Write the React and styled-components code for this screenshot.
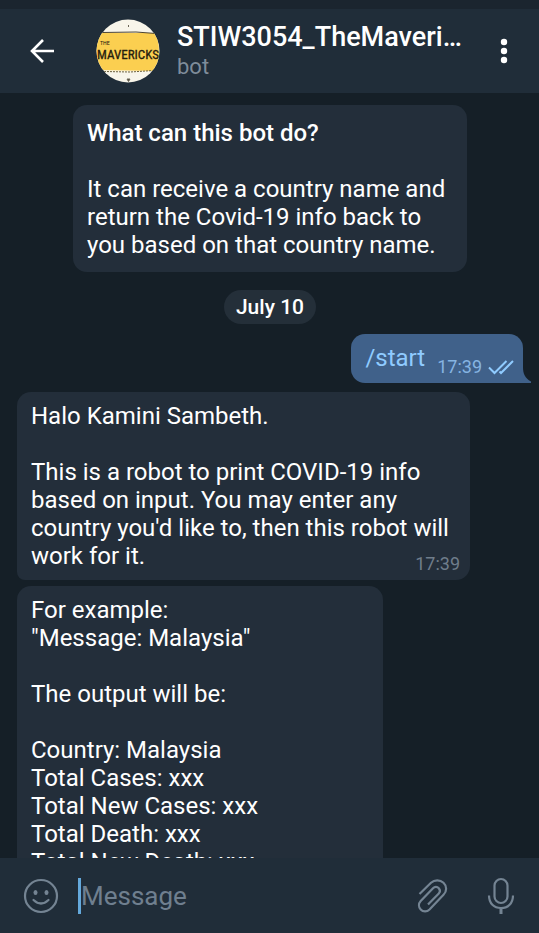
import React from "react";
import styled, { createGlobalStyle } from "styled-components";

const GlobalStyle = createGlobalStyle`
  *, *::before, *::after { box-sizing: border-box; }
  body {
    margin: 0;
    background: #151f27;
    color: #fff;
    font-family: Roboto, "Liberation Sans", sans-serif;
  }
`;

const Screen = styled.div`
  display: flex;
  flex-direction: column;
  height: 100vh;
  overflow: hidden;
`;

const StatusStrip = styled.div`
  flex: none;
  height: 9px;
  background: #1b252f;
`;

const Header = styled.header`
  flex: none;
  display: flex;
  align-items: center;
  height: 84px;
  padding: 0 19px 0 26px;
  background: #202d39;
`;

const IconButton = styled.button`
  flex: none;
  display: grid;
  place-items: center;
  width: ${(p) => p.$width || 32}px;
  height: 44px;
  padding: 0;
  border: 0;
  background: none;
  color: ${(p) => p.$color || "#748493"};
  cursor: pointer;

  svg { display: block; }
`;

const Avatar = styled.svg`
  flex: none;
  width: 64px;
  height: 64px;
  margin-left: 38px;
`;

const Titles = styled.div`
  flex: 1;
  min-width: 0;
  margin-left: 17px;
  padding-right: 20px;
`;

const Title = styled.h1`
  margin: 0;
  overflow: hidden;
  font-size: 27px;
  font-weight: 500;
  line-height: 32px;
  white-space: nowrap;
  text-overflow: ellipsis;
`;

const Subtitle = styled.p`
  margin: 0;
  color: #7e8c9a;
  font-size: 22px;
  line-height: 28px;
`;

const Chat = styled.main`
  flex: 1;
  min-height: 0;
  display: flex;
  flex-direction: column;
  align-items: flex-start;
  padding: 12px 16px 0 17px;
  overflow: hidden;
`;

const Bubble = styled.article`
  flex: none;
  display: grid;
  max-width: 453px;
  min-width: ${(p) => p.$minWidth || 0}px;
  margin-bottom: 6px;
  padding: 10px 10px 10px 14px;
  border-radius: ${(p) => p.$radius || "14px 14px 14px 8px"};
  background: #232e3a;
`;

const IntroBubble = styled(Bubble)`
  align-self: center;
  max-width: 394px;
  margin-bottom: 18px;
  padding: 14px 14px 13px;
`;

const SentBubble = styled(Bubble)`
  position: relative;
  align-self: flex-end;
  display: flex;
  align-items: flex-end;
  gap: 12px;
  margin-bottom: 9px;
  padding: 10px 9px 4px 14px;
  background: #40618a;
`;

const Text = styled.p`
  grid-area: 1 / 1;
  margin: 0;
  font-size: 24px;
  line-height: 28px;
  white-space: pre-line;
`;

const Strong = styled.strong`
  font-weight: 500;
`;

const Command = styled.a`
  padding-bottom: 7px;
  color: #8fcbff;
  font-size: 24px;
  line-height: 28px;
  text-decoration: none;
`;

const Time = styled.time`
  grid-area: 1 / 1;
  place-self: end;
  margin-bottom: -6px;
  color: #6f7d8b;
  font-size: 18px;
  line-height: 24px;
`;

const SentMeta = styled.span`
  display: flex;
  align-items: center;
  gap: 6px;
  color: #86b4e2;
  font-size: 18px;
  line-height: 24px;
`;

const Tail = styled.svg`
  position: absolute;
  right: -8px;
  bottom: 0;
`;

const DateChip = styled.div`
  flex: none;
  align-self: center;
  margin-bottom: 10px;
  padding: 3px 12px;
  border-radius: 17px;
  background: #242f39;
  font-size: 21px;
  font-weight: 500;
  line-height: 28px;
`;

const Composer = styled.form`
  flex: none;
  display: flex;
  align-items: center;
  height: 75px;
  padding: 0 22px 0 23px;
  background: #202d39;
`;

const MessageInput = styled.input`
  flex: 1;
  min-width: 0;
  height: 36px;
  margin: 0 20px 0 19px;
  padding: 0;
  border: 0;
  border-left: 3px solid #64a9dc;
  outline: 0;
  background: none;
  color: #fff;
  font: 26px Roboto, "Liberation Sans", sans-serif;

  &::placeholder { color: #6f7f8f; opacity: 1; }
`;

const TrailingActions = styled.div`
  display: flex;
  gap: 36px;
`;

function MavericksAvatar() {
  return (
    <Avatar viewBox="0 0 64 64" role="img" aria-label="The Mavericks">
      <defs>
        <clipPath id="avatar-circle"><circle cx="32" cy="32" r="31.5" /></clipPath>
      </defs>
      <g clipPath="url(#avatar-circle)">
        <rect width="64" height="64" fill="#f8f5ea" />
        <path d="M0 14 L62 14 L64 52 L0 51Z" fill="#fbcf50" />
        <path d="M6 13.5 L40 13 L60 14.5" fill="none" stroke="#4b4330" strokeWidth="1" />
        <path d="M8 52.5 L34 53 L58 51.5" fill="none" stroke="#6b603c" strokeWidth="1" strokeDasharray="2 1" />
        <path d="M32.5 6v2M31 60h3l-1.5 2.5z" stroke="#6b6556" fill="#4b4330" strokeWidth="1" />
        <text x="4" y="26" fontFamily="'Liberation Sans Narrow', 'Roboto Condensed', sans-serif" fontSize="6" fill="#25200f">THE</text>
        <text x="32" y="40" textAnchor="middle" fontFamily="'Liberation Sans Narrow', 'Roboto Condensed', sans-serif" fontSize="13" fill="#25200f" stroke="#25200f" strokeWidth="0.3">MAVERICKS</text>
      </g>
    </Avatar>
  );
}

export default function App() {
  return (
    <>
      <GlobalStyle />
      <Screen>
        <StatusStrip />
        <Header>
          <IconButton type="button" aria-label="Back" $color="#fff">
            <svg width="26" height="26" viewBox="0 0 26 26" fill="none" stroke="currentColor" strokeWidth="2.6">
              <path d="M25 13H3M14 2 3 13l11 11" />
            </svg>
          </IconButton>
          <MavericksAvatar />
          <Titles>
            <Title>STIW3054_TheMavericks_bot</Title>
            <Subtitle>bot</Subtitle>
          </Titles>
          <IconButton type="button" aria-label="More options" $color="#fff">
            <svg width="8" height="26" viewBox="0 0 8 26" fill="currentColor">
              <circle cx="4" cy="4" r="3.2" />
              <circle cx="4" cy="13" r="3.2" />
              <circle cx="4" cy="22" r="3.2" />
            </svg>
          </IconButton>
        </Header>

        <Chat>
          <IntroBubble $radius="14px">
            <Text>
              <Strong>What can this bot do?</Strong>
              {"\n\nIt can receive a country name and return the Covid-19 info back to you based on that country name."}
            </Text>
          </IntroBubble>

          <DateChip>July 10</DateChip>

          <SentBubble $radius="14px 14px 0 14px">
            <Command href="#start">/start</Command>
            <SentMeta>
              <time>17:39</time>
              <svg width="26" height="16" viewBox="0 0 26 16" fill="none" stroke="#8fcbff" strokeWidth="2" role="img" aria-label="Read">
                <path d="M1 8.500l5.500 5.500L18.500 2M11.500 12.500l1.500 1.500L25 2" />
              </svg>
            </SentMeta>
            <Tail width="9" height="16" viewBox="0 0 9 16" fill="#40618a" aria-hidden="true">
              <path d="M0 0h1c0 7 2 11 8 14.500V16H0z" />
            </Tail>
          </SentBubble>

          <Bubble>
            <Text>
              {"Halo Kamini Sambeth.\n\nThis is a robot to print COVID-19 info based on input. You may enter any country you'd like to, then this robot will work for it."}
            </Text>
            <Time>17:39</Time>
          </Bubble>

          <Bubble $minWidth={366}>
            <Text>
              {'For example:\n"Message: Malaysia"\n\nThe output will be:\n\nCountry: Malaysia\nTotal Cases: xxx\nTotal New Cases: xxx\nTotal Death: xxx\nTotal New Death: xxx'}
            </Text>
          </Bubble>
        </Chat>

        <Composer onSubmit={(e) => e.preventDefault()}>
          <IconButton type="button" aria-label="Emoji" $width={36}>
            <svg width="36" height="36" viewBox="0 0 36 36" fill="none" stroke="currentColor" strokeWidth="2.2">
              <circle cx="18" cy="18" r="16" />
              <ellipse cx="12.500" cy="14.500" rx="2" ry="2.500" fill="currentColor" stroke="none" />
              <ellipse cx="23.500" cy="14.500" rx="2" ry="2.500" fill="currentColor" stroke="none" />
              <path d="M10.500 22q7.500 7 15 0" strokeLinecap="round" />
            </svg>
          </IconButton>
          <MessageInput type="text" placeholder="Message" aria-label="Message" />
          <TrailingActions>
            <IconButton type="button" aria-label="Attach file">
              <svg width="32" height="36" viewBox="0 0 32 36" fill="none" stroke="currentColor" strokeWidth="2.200">
                <path d="M2.500 16 14 4.800C17.500 1.500 23 1.500 26.500 4.800s3.500 8.500 0 12L12.500 31.500c-2.500 2.500-6.500 2.500-8.800 0s-2.300-6 0-8.500L16 10.200c1.700-1.700 4.300-1.700 5.800 0s1.500 3.600 0 5.200L11 26.500" />
              </svg>
            </IconButton>
            <IconButton type="button" aria-label="Record voice message">
              <svg width="30" height="38" viewBox="0 0 30 38" fill="none" stroke="currentColor" strokeWidth="2.200">
                <rect x="8.500" y="2" width="13" height="24" rx="6.500" />
                <path d="M3 18.500c0 8 5 12.500 12 12.500s12-4.500 12-12.500" />
                <path d="M15 31v6" strokeWidth="3" />
              </svg>
            </IconButton>
          </TrailingActions>
        </Composer>
      </Screen>
    </>
  );
}
